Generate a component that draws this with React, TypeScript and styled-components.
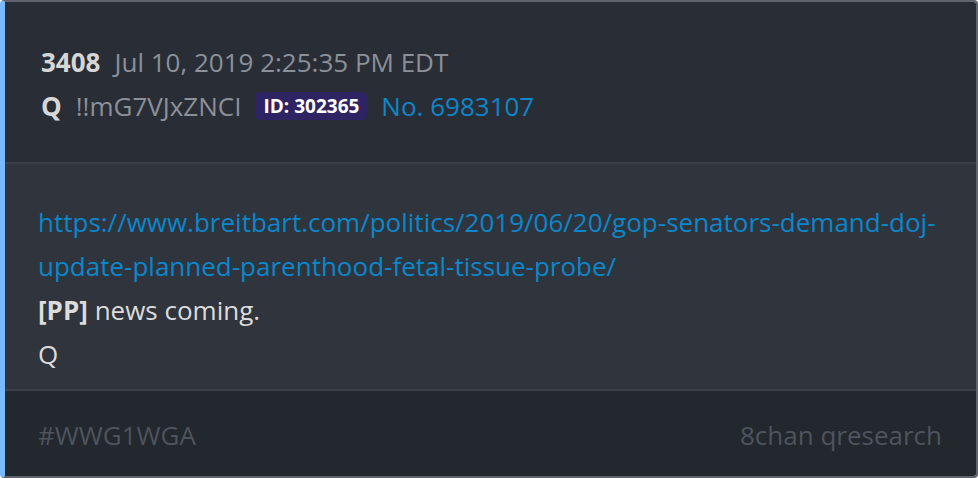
import React from 'react';
import styled, { createGlobalStyle } from 'styled-components';

const GlobalStyle = createGlobalStyle`
	html, body {
		margin: 0;
		padding: 0;
		background: #ffffff;
	}
	body {
		font-family: 'Open Sans', 'Noto Sans', sans-serif;
	}
`;

// Post card
const Card = styled.article`
	width: 978px;
	height: 478px;
	box-sizing: border-box;
	display: flex;
	flex-direction: column;
	border: 2px solid #5f646d;
	border-left: 5px solid #7ab8ff;
	border-radius: 4px;
	overflow: hidden;
	font-size: 26px;
	line-height: 44px;
`;

const Header = styled.header`
	background: #292d35;
	padding: 38px 36px 34px;
	border-bottom: 2px solid #3b4049;
`;

const Line = styled.div`
	display: flex;
	align-items: center;
	gap: 14px;
	white-space: nowrap;
`;

const Num = styled.span`
	font-weight: 700;
	color: #d6d6d6;
`;

const Muted = styled.span`
	color: #8b9099;
`;

const Badge = styled.span`
	background: #2e2363;
	color: #ffffff;
	font-weight: 700;
	font-size: 19px;
	line-height: 28px;
	padding: 0 8px;
	border-radius: 5px;
`;

const Blue = styled.a`
	color: #0b87cc;
	text-decoration: none;
`;

const Body = styled.section`
	flex: 1;
	background: #2f343d;
	padding: 36px 33px 10px;
	border-bottom: 2px solid #3b4049;
	color: #dcdcdc;
`;

const Para = styled.p`
	margin: 0;
`;

const Footer = styled.footer`
	background: #23272e;
	display: flex;
	justify-content: space-between;
	padding: 22px 34px 19px 33px;
	color: #4e545d;
`;

export default function App() {
	return (
		<>
			<GlobalStyle />
			<Card>
				<Header>
					<Line>
						<Num>3408</Num>
						<Muted>Jul 10, 2019 2:25:35 PM EDT</Muted>
					</Line>
					<Line>
						<Num>Q</Num>
						<Muted>!!mG7VJxZNCI</Muted>
						<Badge>ID: 302365</Badge>
						<Blue href="#">No. 6983107</Blue>
					</Line>
				</Header>
				<Body>
					<Para>
						<Blue href="#">
							https://www.breitbart.com/politics/2019/06/20/gop-senators-demand-doj-
							<br />
							update-planned-parenthood-fetal-tissue-probe/
						</Blue>
					</Para>
					<Para>
						<b>[PP]</b> news coming.
					</Para>
					<Para>Q</Para>
				</Body>
				<Footer>
					<span>#WWG1WGA</span>
					<span>8chan qresearch</span>
				</Footer>
			</Card>
		</>
	);
}
